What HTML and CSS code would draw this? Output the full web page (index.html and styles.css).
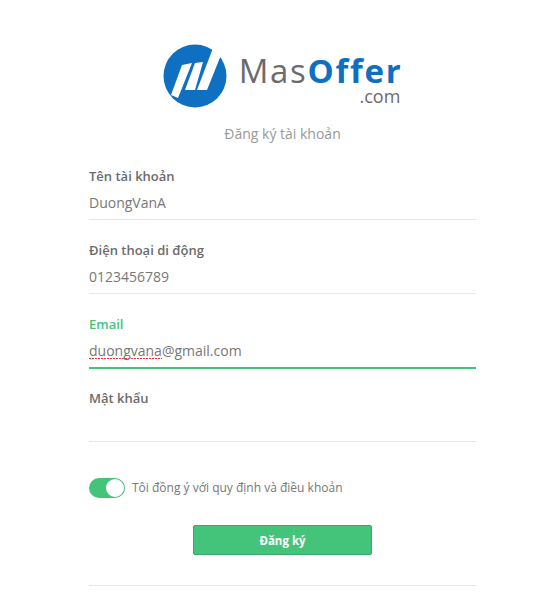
FILE: index.html
```html
<!DOCTYPE html>
<html lang="en">
<head>
  <meta charset="UTF-8">
  <title>Đăng ký tài khoản</title>
  <link rel="stylesheet" href="styles.css">
</head>
<body>

  <div class="page">
    <div class="logo">
      <svg class="logo-mark" viewBox="0 0 64 64" width="64" height="64">
        <circle cx="32" cy="32" r="31.5" fill="#0f6fc0"/>
        <path d="M8 51 L19 21 L29 19 L15 54 Z" fill="#fff"/>
        <path d="M22 46 L32 19 L40 18 L32 46 Z" fill="#fff"/>
        <path d="M34 46 L50 4 L58 11 L44 46 Z" fill="#fff"/>
      </svg>
      <div class="logo-text">
        <div class="logo-name">Mas<span class="logo-offer">Offer</span></div>
        <div class="logo-com">.com</div>
      </div>
    </div>

    <h1 class="title">Đăng ký tài khoản</h1>

    <form class="form">
      <div class="field">
        <label>Tên tài khoản</label>
        <div class="value">DuongVanA</div>
      </div>
      <div class="field">
        <label>Điện thoại di động</label>
        <div class="value">0123456789</div>
      </div>
      <div class="field active">
        <label>Email</label>
        <div class="value"><span class="typo">duongvana</span>@gmail.com</div>
      </div>
      <div class="field">
        <label>Mật khẩu</label>
        <div class="value"></div>
      </div>

      <div class="agree">
        <span class="toggle"><span class="knob"></span></span>
        <span>Tôi đồng ý với quy định và điều khoản</span>
      </div>

      <div class="actions">
        <button type="button" class="submit">Đăng ký</button>
      </div>

      <div class="bottom-line"></div>
    </form>
  </div>

</body>
</html>
```

FILE: styles.css
```css
html, body {
  margin: 0;
  background: #fff;
  overflow: hidden;
}

body {
  color: #6b6b6b;
  font-family: "Open Sans", sans-serif;
}

.page {
  width: 387px;
  height: 606px;
  margin-left: 89px;
  padding-top: 44px;
  box-sizing: border-box;
}

.logo {
  display: flex;
  justify-content: center;
  gap: 12px;
  height: 64px;
}

.logo-text {
  text-align: right;
}

.logo-name {
  margin-top: 11px;
  font-size: 33px;
  line-height: 32px;
  letter-spacing: 1.7px;
  color: #6b6b6e;
}

.logo-offer {
  color: #0f6fc0;
  font-weight: 700;
}

.logo-com {
  margin-right: 2px;
  font-size: 18px;
  line-height: 18px;
  color: #6b6b6e;
}

.title {
  margin: 16px 0 0;
  font-size: 14px;
  line-height: 20px;
  font-weight: 400;
  color: #999;
  text-align: center;
}

.form {
  margin-top: 23px;
}

.field {
  height: 53px;
  margin-bottom: 21px;
  padding-bottom: 5px;
  box-sizing: border-box;
  border-bottom: 1px solid #e6e6e6;
}

.field label {
  display: block;
  font-size: 13px;
  line-height: 18px;
  font-weight: 600;
}

.value {
  margin-top: 8px;
  font-size: 14px;
  line-height: 20px;
  color: #777;
}

.field.active {
  height: 54px;
  margin-bottom: 20px;
  border-bottom: 2px solid #44c47b;
}

.field.active label {
  color: #44c47b;
}

/* spell check squiggle */
.typo {
  background: repeating-linear-gradient(90deg, #e33 0 2px, transparent 2px 3px) 0 calc(100% - 1px) / 100% 1px no-repeat;
}

.agree {
  display: flex;
  align-items: center;
  gap: 7px;
  margin-top: 36px;
  font-size: 12px;
  line-height: 20px;
  color: #777;
}

.toggle {
  display: flex;
  justify-content: flex-end;
  align-items: center;
  width: 36px;
  height: 20px;
  padding: 1px;
  box-sizing: border-box;
  border-radius: 10px;
  background: #44c47b;
}

.knob {
  width: 18px;
  height: 18px;
  border-radius: 50%;
  background: #fff;
}

.actions {
  display: flex;
  justify-content: center;
  margin-top: 27px;
}

.submit {
  width: 179px;
  height: 30px;
  padding: 0;
  border: 1px solid #3aa96b;
  border-radius: 2px;
  background: #44c47b;
  color: #fff;
  font-family: inherit;
  font-size: 11.5px;
  font-weight: 700;
}

.bottom-line {
  margin-top: 30px;
  border-top: 1px solid #e6e6e6;
}
```
